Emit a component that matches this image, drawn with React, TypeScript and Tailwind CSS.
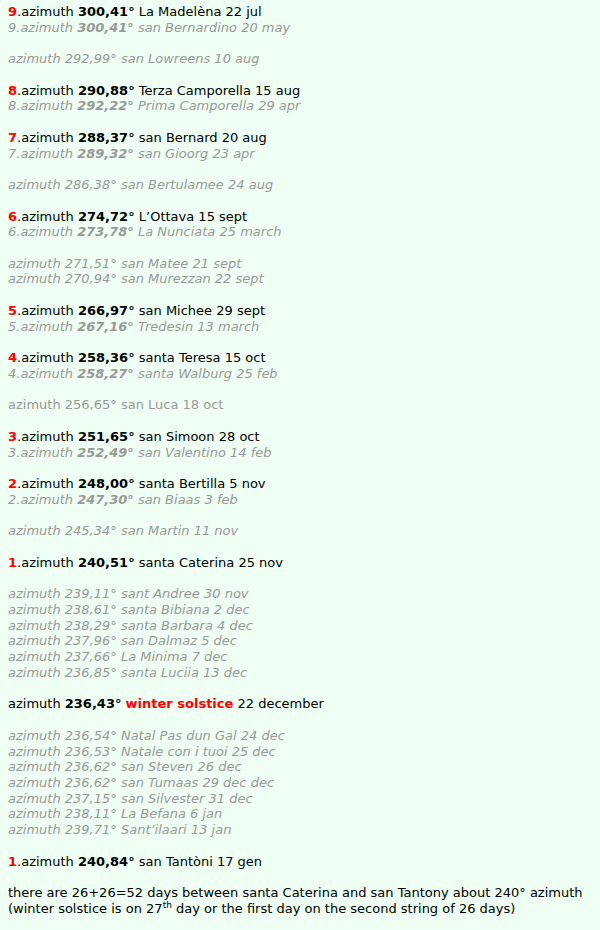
type Row =
  | { kind: "main"; n?: string; az: string; name: string; date: string }
  | { kind: "alt"; n?: string; az: string; name: string; date: string; bold?: boolean }
  | { kind: "gap" };

const rows: Row[] = [
  { kind: "main", n: "9", az: "300,41°", name: "La Madelèna", date: "22 jul" },
  { kind: "alt", n: "9", az: "300,41°", name: "san Bernardino", date: "20 may", bold: true },
  { kind: "gap" },
  { kind: "alt", az: "292,99°", name: "san Lowreens", date: "10 aug" },
  { kind: "gap" },
  { kind: "main", n: "8", az: "290,88°", name: "Terza Camporella", date: "15 aug" },
  { kind: "alt", n: "8", az: "292,22°", name: "Prima Camporella", date: "29 apr", bold: true },
  { kind: "gap" },
  { kind: "main", n: "7", az: "288,37°", name: "san Bernard", date: "20 aug" },
  { kind: "alt", n: "7", az: "289,32°", name: "san Gioorg", date: "23 apr", bold: true },
  { kind: "gap" },
  { kind: "alt", az: "286,38°", name: "san Bertulamee", date: "24 aug" },
  { kind: "gap" },
  { kind: "main", n: "6", az: "274,72°", name: "L’Ottava", date: "15 sept" },
  { kind: "alt", n: "6", az: "273,78°", name: "La Nunciata", date: "25 march", bold: true },
  { kind: "gap" },
  { kind: "alt", az: "271,51°", name: "san Matee", date: "21 sept" },
  { kind: "alt", az: "270,94°", name: "san Murezzan", date: "22 sept" },
  { kind: "gap" },
  { kind: "main", n: "5", az: "266,97°", name: "san Michee", date: "29 sept" },
  { kind: "alt", n: "5", az: "267,16°", name: "Tredesin", date: "13 march", bold: true },
  { kind: "gap" },
  { kind: "main", n: "4", az: "258,36°", name: "santa Teresa", date: "15 oct" },
  { kind: "alt", n: "4", az: "258,27°", name: "santa Walburg", date: "25 feb", bold: true },
  { kind: "gap" },
];

const rows2: Row[] = [
  { kind: "gap" },
  { kind: "main", n: "3", az: "251,65°", name: "san Simoon", date: "28 oct" },
  { kind: "alt", n: "3", az: "252,49°", name: "san Valentino", date: "14 feb", bold: true },
  { kind: "gap" },
  { kind: "main", n: "2", az: "248,00°", name: "santa Bertilla", date: "5 nov" },
  { kind: "alt", n: "2", az: "247,30°", name: "san Biaas", date: "3 feb", bold: true },
  { kind: "gap" },
  { kind: "alt", az: "245,34°", name: "san Martin", date: "11 nov" },
  { kind: "gap" },
  { kind: "main", n: "1", az: "240,51°", name: "santa Caterina", date: "25 nov" },
  { kind: "gap" },
  { kind: "alt", az: "239,11°", name: "sant Andree", date: "30 nov" },
  { kind: "alt", az: "238,61°", name: "santa Bibiana", date: "2 dec" },
  { kind: "alt", az: "238,29°", name: "santa Barbara", date: "4 dec" },
  { kind: "alt", az: "237,96°", name: "san Dalmaz", date: "5 dec" },
  { kind: "alt", az: "237,66°", name: "La Minima", date: "7 dec" },
  { kind: "alt", az: "236,85°", name: "santa Luciia", date: "13 dec" },
  { kind: "gap" },
];

const rows3: Row[] = [
  { kind: "gap" },
  { kind: "alt", az: "236,54°", name: "Natal Pas dun Gal", date: "24 dec" },
  { kind: "alt", az: "236,53°", name: "Natale con i tuoi", date: "25 dec" },
  { kind: "alt", az: "236,62°", name: "san Steven", date: "26 dec" },
  { kind: "alt", az: "236,62°", name: "san Tumaas", date: "29 dec dec" },
  { kind: "alt", az: "237,15°", name: "san Silvester", date: "31 dec" },
  { kind: "alt", az: "238,11°", name: "La Befana", date: "6 jan" },
  { kind: "alt", az: "239,71°", name: "Sant’ilaari", date: "13 jan" },
  { kind: "gap" },
  { kind: "main", n: "1", az: "240,84°", name: "san Tantòni", date: "17 gen" },
  { kind: "gap" },
];

const lineClass = "h-[15.74px] whitespace-nowrap";

function Line({ row }: { row: Row }) {
  if (row.kind === "gap") return <div className={lineClass} />;
  if (row.kind === "main")
    return (
      <div className={lineClass}>
        {row.n && <b className="text-[#ff0000]">{row.n}</b>}
        {row.n && "."}azimuth <b>{row.az}</b> {row.name} {row.date}
      </div>
    );
  // the gray italic lines: numbered ones carry a bold azimuth, the others don't
  return (
    <div className={lineClass + " italic text-[#999999]"}>
      {row.n && row.n + "."}azimuth {row.bold ? <b>{row.az}</b> : row.az}{" "}
      {row.name} {row.date}
    </div>
  );
}

export default function App() {
  return (
    <div
      className="min-h-[930px] w-[600px] bg-[#effff3] px-2 pt-[4px] text-[13px] leading-[15.74px] text-black"
      style={{ fontFamily: "'DejaVu Sans', Verdana, sans-serif" }}
    >
      {rows.map((r, i) => (
        <Line key={"a" + i} row={r} />
      ))}
      <div className={lineClass + " text-[#999999]"}>
        azimuth 256,65° san Luca 18 oct
      </div>
      {rows2.map((r, i) => (
        <Line key={"b" + i} row={r} />
      ))}
      <div className={lineClass}>
        azimuth <b>236,43°</b>{" "}
        <b className="text-[#ff0000]">winter solstice</b> 22 december
      </div>
      {rows3.map((r, i) => (
        <Line key={"c" + i} row={r} />
      ))}
      <div className={lineClass}>
        there are 26+26=52 days between santa Caterina and san Tantony about
        240° azimuth
      </div>
      <div className={lineClass}>
        (winter solstice is on 27
        <sup className="text-[9px]">th</sup> day or the first day on the second
        string of 26 days)
      </div>
    </div>
  );
}
